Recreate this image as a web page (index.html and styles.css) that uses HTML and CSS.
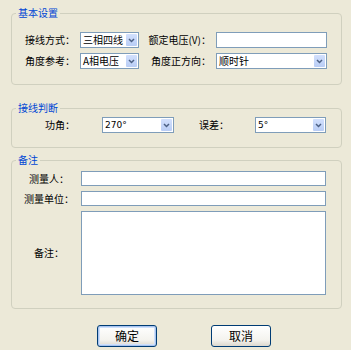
FILE: index.html
```html
<!DOCTYPE html>
<html>
<head>
<meta charset="utf-8">
<link rel="stylesheet" href="styles.css">
</head>
<body>
<div class="dialog">
  <fieldset class="group g1">
    <legend>基本设置</legend>
    <div class="grid1">
      <span class="lbl">接线方式：</span>
      <div class="combo"><span class="val">三相四线</span><span class="btn"><svg width="7" height="5" viewBox="0 0 7 5"><path d="M1 1 L3.5 3.5 L6 1" fill="none" stroke="#4d6185" stroke-width="1.5"/></svg></span></div>
      <span class="lbl r">额定电压(V)：</span>
      <input class="text" type="text">
      <span class="lbl">角度参考：</span>
      <div class="combo"><span class="val">A相电压</span><span class="btn"><svg width="7" height="5" viewBox="0 0 7 5"><path d="M1 1 L3.5 3.5 L6 1" fill="none" stroke="#4d6185" stroke-width="1.5"/></svg></span></div>
      <span class="lbl r">角度正方向：</span>
      <div class="combo"><span class="val">顺时针</span><span class="btn"><svg width="7" height="5" viewBox="0 0 7 5"><path d="M1 1 L3.5 3.5 L6 1" fill="none" stroke="#4d6185" stroke-width="1.5"/></svg></span></div>
    </div>
  </fieldset>

  <fieldset class="group g2">
    <legend>接线判断</legend>
    <div class="grid2">
      <span class="lbl">功角：</span>
      <div class="combo"><span class="val num">270°</span><span class="btn"><svg width="7" height="5" viewBox="0 0 7 5"><path d="M1 1 L3.5 3.5 L6 1" fill="none" stroke="#4d6185" stroke-width="1.5"/></svg></span></div>
      <span class="lbl pl">误差：</span>
      <div class="combo"><span class="val num">5°</span><span class="btn"><svg width="7" height="5" viewBox="0 0 7 5"><path d="M1 1 L3.5 3.5 L6 1" fill="none" stroke="#4d6185" stroke-width="1.5"/></svg></span></div>
    </div>
  </fieldset>

  <fieldset class="group g3">
    <legend>备注</legend>
    <div class="grid3">
      <span class="lbl c">测量人：</span>
      <input class="text short" type="text">
      <span class="lbl c">测量单位：</span>
      <input class="text short" type="text">
      <span class="lbl c">备注：</span>
      <textarea class="area"></textarea>
    </div>
  </fieldset>

  <div class="actions">
    <button class="xpbtn default" type="button">确定</button>
    <button class="xpbtn" type="button">取消</button>
  </div>
</div>
</body>
</html>
```

FILE: styles.css
```css
html, body {
  margin: 0;
  padding: 0;
  background: #ece9d8;
}
body {
  width: 351px;
  height: 350px;
  overflow: hidden;
  font-family: "Noto Sans CJK SC", "Liberation Sans", sans-serif;
  font-size: 10px;
  color: #000;
}
.dialog {
  padding-top: 6px;
}
.group {
  margin: 0 9px 0 11px;
  padding: 0;
  border: 1px solid #d0d0bf;
  border-radius: 4px;
  min-inline-size: 0;
}
.group legend {
  margin-left: 4px;
  padding: 0 2px;
  line-height: 14px;
  font-size: 10px;
  color: #0046d5;
}
.g2 { margin-top: 16px; }
.g3 { margin-top: 5px; }

.lbl {
  line-height: 14px;
  white-space: nowrap;
}
.lbl.r {
  text-align: right;
  padding-right: 5px;
}
.lbl.pl {
  padding-left: 25px;
}
.lbl.c {
  text-align: center;
}

.grid1 {
  display: grid;
  grid-template-columns: 55px 59px 1fr 111px;
  grid-auto-rows: 16px;
  row-gap: 5px;
  align-items: center;
  padding: 12px 14px 15px 13px;
}
.grid2 {
  display: grid;
  grid-template-columns: 57px 72px 81px 71px;
  grid-auto-rows: 16px;
  align-items: center;
  padding: 2px 15px 14px 33px;
}
.grid3 {
  display: grid;
  grid-template-columns: 64px 1fr;
  grid-template-rows: 15px 15px 84px;
  row-gap: 5px;
  align-items: center;
  padding: 4px 15px 13px 5px;
}

.combo {
  height: 16px;
  box-sizing: border-box;
  border: 1px solid #7f9db9;
  background: #fff;
  display: flex;
  align-items: center;
}
.combo .val {
  flex: 1;
  padding-left: 2px;
  line-height: 14px;
  white-space: nowrap;
  overflow: hidden;
}
.combo .val.num {
  font-family: "DejaVu Sans", "Liberation Sans", sans-serif;
  font-size: 9px;
}
.combo .btn {
  width: 11px;
  height: 12px;
  margin-right: 1px;
  border-radius: 1px;
  background: linear-gradient(#d2e0fd, #b9cdf5);
  display: flex;
  align-items: center;
  justify-content: center;
}
.combo .btn svg { display: block; }

.text, .area {
  display: block;
  margin: 0;
  padding: 0;
  box-sizing: border-box;
  width: 100%;
  border: 1px solid #7f9db9;
  background: #fff;
  font: inherit;
  outline: none;
}
.text { height: 16px; }
.text.short { height: 15px; }
.area {
  height: 84px;
  resize: none;
}

.actions {
  display: flex;
  gap: 54px;
  padding-left: 97px;
  margin-top: 16px;
}
.xpbtn {
  width: 60px;
  height: 22px;
  margin: 0;
  padding: 0;
  box-sizing: border-box;
  border: 1px solid #003c74;
  border-radius: 3px;
  background: linear-gradient(#ffffff, #f4f3ee 70%, #dcd8ce);
  font-family: "Noto Sans CJK SC", "Liberation Sans", sans-serif;
  font-size: 12px;
  color: #000;
  line-height: 20px;
}
.xpbtn.default {
  box-shadow: inset 0 0 0 1px #a8c4ef, inset 0 0 0 2px #cfe0fb;
}
```
